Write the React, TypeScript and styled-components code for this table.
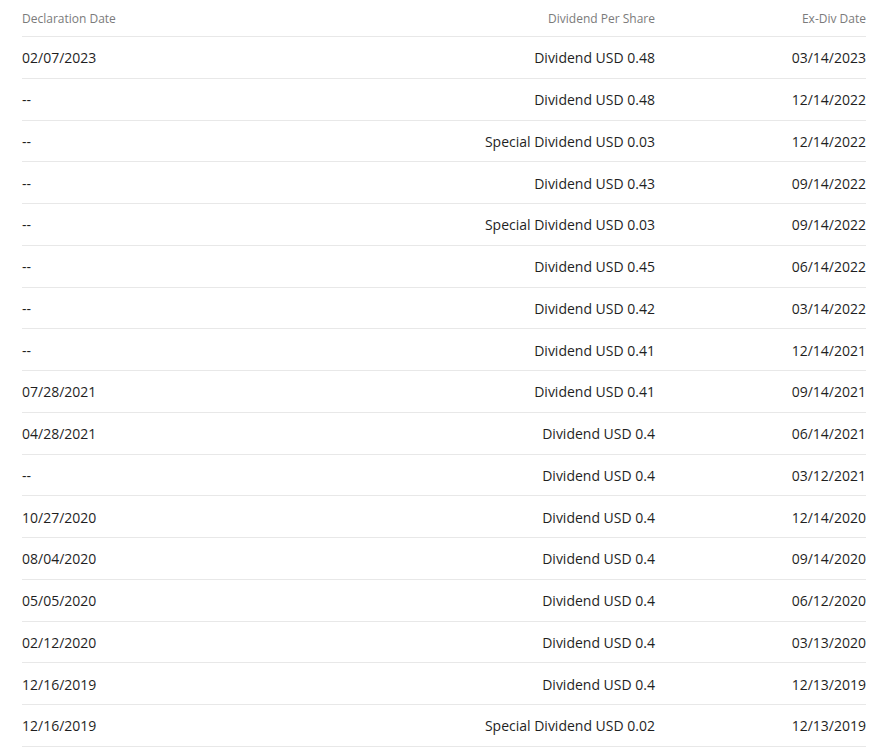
import React from "react";
import styled, { createGlobalStyle } from "styled-components";

const GlobalStyle = createGlobalStyle`
  body {
    margin: 0;
    background: #fff;
    font-family: "Open Sans", "Liberation Sans", sans-serif;
  }
`;

const Wrapper = styled.div`
  padding: 0 25px 0 22px;
`;

const Row = styled.div<{ $head?: boolean }>`
  display: grid;
  grid-template-columns: 2fr 1fr 1fr;
  align-items: center;
  height: ${({ $head }) => ($head ? "37px" : "41.76px")};
  box-sizing: border-box;
  border-bottom: 1px solid #e8e8e8;
  font-size: ${({ $head }) => ($head ? "12px" : "14px")};
  color: ${({ $head }) => ($head ? "#7b7b7b" : "#1f1f1f")};
  padding-top: ${({ $head }) => ($head ? "0" : "1px")};
`;

const Cell = styled.div<{ $right?: boolean }>`
  text-align: ${({ $right }) => ($right ? "right" : "left")};
  white-space: nowrap;
`;

const rows: [string, string, string][] = [
  ["02/07/2023", "Dividend USD 0.48", "03/14/2023"],
  ["--", "Dividend USD 0.48", "12/14/2022"],
  ["--", "Special Dividend USD 0.03", "12/14/2022"],
  ["--", "Dividend USD 0.43", "09/14/2022"],
  ["--", "Special Dividend USD 0.03", "09/14/2022"],
  ["--", "Dividend USD 0.45", "06/14/2022"],
  ["--", "Dividend USD 0.42", "03/14/2022"],
  ["--", "Dividend USD 0.41", "12/14/2021"],
  ["07/28/2021", "Dividend USD 0.41", "09/14/2021"],
  ["04/28/2021", "Dividend USD 0.4", "06/14/2021"],
  ["--", "Dividend USD 0.4", "03/12/2021"],
  ["10/27/2020", "Dividend USD 0.4", "12/14/2020"],
  ["08/04/2020", "Dividend USD 0.4", "09/14/2020"],
  ["05/05/2020", "Dividend USD 0.4", "06/12/2020"],
  ["02/12/2020", "Dividend USD 0.4", "03/13/2020"],
  ["12/16/2019", "Dividend USD 0.4", "12/13/2019"],
  ["12/16/2019", "Special Dividend USD 0.02", "12/13/2019"],
];

export default function App() {
  return (
    <>
      <GlobalStyle />
      <Wrapper>
        <Row $head>
          <Cell>Declaration Date</Cell>
          <Cell $right>Dividend Per Share</Cell>
          <Cell $right>Ex-Div Date</Cell>
        </Row>
        {rows.map(([decl, amount, exDiv], i) => (
          <Row key={i}>
            <Cell>{decl}</Cell>
            <Cell $right>{amount}</Cell>
            <Cell $right>{exDiv}</Cell>
          </Row>
        ))}
      </Wrapper>
    </>
  );
}
